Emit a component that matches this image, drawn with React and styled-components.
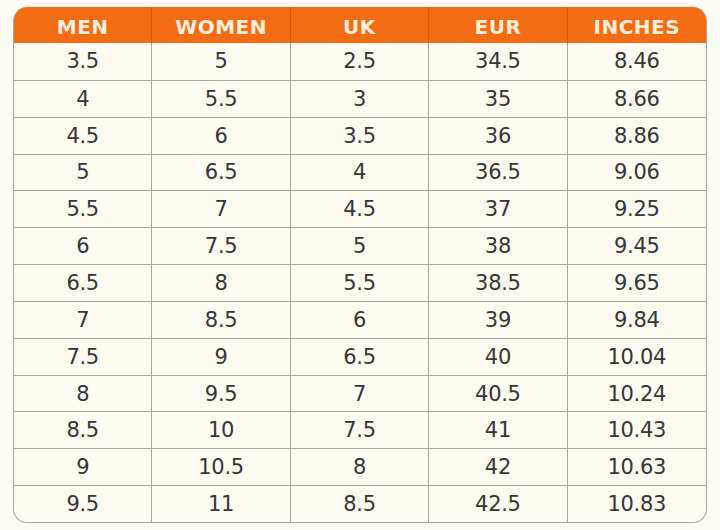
import React from "react";
import styled, { createGlobalStyle } from "styled-components";

const GlobalStyle = createGlobalStyle`
  html, body {
    margin: 0;
    background: #fdfbf3;
  }
  body {
    font-family: "DejaVu Sans", "Liberation Sans", sans-serif;
  }
`;

const Page = styled.div`
  width: 720px;
  height: 530px;
  box-sizing: border-box;
  padding: 7px 13px 0 13px;
`;

const Chart = styled.div`
  display: grid;
  grid-template-columns: repeat(5, 1fr);
  grid-template-rows: 36px repeat(13, 1fr);
  width: 694px;
  height: 516px;
  box-sizing: border-box;
  border: 1.5px solid #aaa69f;
  border-top: none;
  border-radius: 14px;
  overflow: hidden;
  background: #fdfaf2;
`;

const HeadCell = styled.div`
  display: flex;
  align-items: center;
  justify-content: center;
  padding-top: 4px;
  background: #f36c14;
  color: #fdeedb;
  font-weight: 700;
  font-size: 20px;
  letter-spacing: 0.5px;
  border-right: ${(p) => (p.last ? "none" : "1px solid #d95c0c")};
`;

const Cell = styled.div`
  display: flex;
  align-items: center;
  justify-content: center;
  color: #363636;
  font-size: 21px;
  letter-spacing: -0.3px;
  border-right: ${(p) => (p.last ? "none" : "1.5px solid #aaa69f")};
  border-top: ${(p) => (p.first ? "none" : "1.5px solid #aaa69f")};
`;

const headers = ["MEN", "WOMEN", "UK", "EUR", "INCHES"];

const rows = [
  ["3.5", "5", "2.5", "34.5", "8.46"],
  ["4", "5.5", "3", "35", "8.66"],
  ["4.5", "6", "3.5", "36", "8.86"],
  ["5", "6.5", "4", "36.5", "9.06"],
  ["5.5", "7", "4.5", "37", "9.25"],
  ["6", "7.5", "5", "38", "9.45"],
  ["6.5", "8", "5.5", "38.5", "9.65"],
  ["7", "8.5", "6", "39", "9.84"],
  ["7.5", "9", "6.5", "40", "10.04"],
  ["8", "9.5", "7", "40.5", "10.24"],
  ["8.5", "10", "7.5", "41", "10.43"],
  ["9", "10.5", "8", "42", "10.63"],
  ["9.5", "11", "8.5", "42.5", "10.83"],
];

export default function App() {
  return (
    <Page>
      <GlobalStyle />
      <Chart>
        {headers.map((h, i) => (
          <HeadCell key={h} last={i === headers.length - 1}>
            {h}
          </HeadCell>
        ))}
        {rows.map((row, r) =>
          row.map((v, c) => (
            <Cell key={r + "-" + c} first={r === 0} last={c === row.length - 1}>
              {v}
            </Cell>
          ))
        )}
      </Chart>
    </Page>
  );
}
